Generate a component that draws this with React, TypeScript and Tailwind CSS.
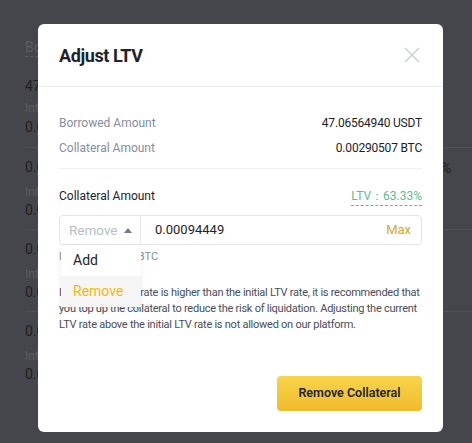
import React from 'react';

const font = { fontFamily: 'Roboto, "Liberation Sans", sans-serif' };

function BgGroup({ first }: { first?: boolean }) {
  return (
    <div className="border-t border-[#505156] h-[82px] relative">
      <div className="pt-[10px] text-[14px] leading-[18px] text-[#1d1e21]">0.0054</div>
      <div className="mt-[8px] text-[12px] leading-[16px] text-[#5c5d62]">Interest</div>
      <div className="mt-[1px] text-[14px] leading-[18px] text-[#1d1e21]">0.0021</div>
      {first && <div className="absolute left-[416px] top-[11px] text-[14px] leading-[18px] text-[#1d1e21]">%</div>}
    </div>
  );
}

export default function App() {
  return (
    <div className="relative w-[472px] h-[443px] overflow-hidden bg-[#45464b]" style={font}>
      {/* page under the overlay */}
      <div className="pl-[25px] pt-[38px]">
        <div className="text-[14px] leading-[18px] text-[#5c5d62] border-b border-dashed border-[#5c5d62] w-fit">Borrowed</div>
        <div className="mt-[20px] text-[14px] leading-[18px] text-[#1d1e21]">47.06564940</div>
        <div className="mt-[5px] text-[12px] leading-[16px] text-[#5c5d62]">Interest</div>
        <div className="mt-[2px] h-[29px] text-[14px] leading-[18px] text-[#1d1e21]">0.0021</div>
        <div>
          <BgGroup first />
          <BgGroup />
          <BgGroup />
        </div>
      </div>

      {/* modal */}
      <div className="absolute left-[38px] top-[24px] w-[405px] h-[408px] bg-white rounded-[6px] flex flex-col">
        <div className="h-[63px] px-[21px] flex items-center justify-between border-b border-[#eaecef]">
          <div className="text-[18px] tracking-[-0.4px] font-bold text-[#1e2329]">Adjust LTV</div>
          <svg width="16" height="16" viewBox="0 0 16 16" className="mr-[2px]">
            <path d="M1 1L15 15M15 1L1 15" stroke="#c8cbd0" strokeWidth="1.4" />
          </svg>
        </div>

        <div className="px-[21px] pt-[24px] flex-1 flex flex-col">
          <div className="flex justify-between text-[12px] leading-[25px]">
            <span className="text-[#848e9c]">Borrowed Amount</span>
            <span className="text-[#1e2329] tracking-[-0.2px]">47.06564940 USDT</span>
          </div>
          <div className="flex justify-between text-[12px] leading-[25px]">
            <span className="text-[#848e9c]">Collateral Amount</span>
            <span className="text-[#1e2329] tracking-[-0.2px]">0.00290507 BTC</span>
          </div>
          <div className="mt-[7px] border-t border-[#f0f1f2]" />

          <div className="mt-[17px] flex justify-between items-center text-[12px] leading-[20px]">
            <span className="text-[#1e2329]">Collateral Amount</span>
            <span className="text-[#5cbd8c] border-b border-dashed border-[#5cbd8c] leading-[18px]">LTV：63.33%</span>
          </div>

          <div className="relative mt-[9px] h-[30px] flex border border-[#e2e4e7] rounded-[4px]">
            <div className="w-[81px] flex items-center justify-between pl-[9px] pr-[8px] border-r border-[#e2e4e7]">
              <span className="text-[13.5px] text-[#b7bdc6]">Remove</span>
              <svg width="8" height="5" viewBox="0 0 8 5">
                <path d="M0 5L4 0L8 5Z" fill="#707a8a" />
              </svg>
            </div>
            <div className="flex-1 flex items-center justify-between pl-[14px] pr-[10px]">
              <span className="text-[13px] text-[#1e2329]">0.00094449</span>
              <span className="text-[13px] text-[#d8a72b]">Max</span>
            </div>

            <div className="absolute left-[1px] top-[29px] w-[80px] bg-white shadow-[0_2px_6px_rgba(0,0,0,0.08)] z-10">
              <div className="h-[31px] flex items-center pl-[12px] text-[14px] text-[#1e2329]">Add</div>
              <div className="h-[31px] flex items-center pl-[12px] text-[14px] text-[#f0b90b] bg-[#f5f5f5]">Remove</div>
            </div>
          </div>

          <div className="mt-[4px] text-[11px] leading-[16px] text-[#848e9c]">Max 0.0009444 BTC</div>

          <p className="mt-[20px] text-[11px] tracking-[-0.25px] leading-[16px] text-[#474d57]">
            If the current LTV rate is higher than the initial LTV rate, it is recommended that you top up the collateral to reduce the risk of liquidation. Adjusting the current LTV rate above the initial LTV rate is not allowed on our platform.
          </p>

          <div className="mt-auto mb-[21px] flex justify-end">
            <button className="w-[145px] h-[35px] rounded-[4px] bg-gradient-to-b from-[#f8d44a] to-[#f0bb2a] text-[12.5px] font-semibold text-[#1e2329]">
              Remove Collateral
            </button>
          </div>
        </div>
      </div>
    </div>
  );
}
